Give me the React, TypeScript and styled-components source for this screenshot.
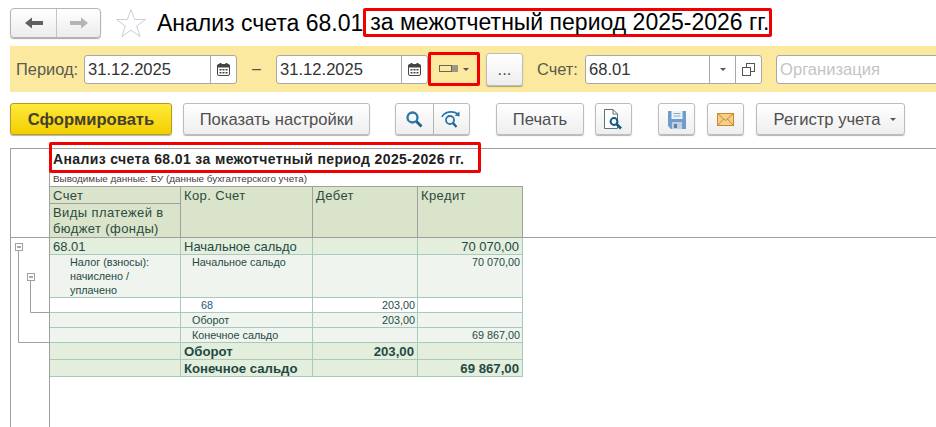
import React from "react";
import styled, { createGlobalStyle } from "styled-components";

const Global = createGlobalStyle`
  html, body { margin: 0; padding: 0; background: #fff; }
  body { font-family: "Liberation Sans", Arial, sans-serif; }
  #root { width: 936px; height: 427px; overflow: hidden; }
  * { box-sizing: border-box; }
`;

const Page = styled.div`
  width: 936px;
  height: 427px;
  overflow: hidden;
  display: flex;
  flex-direction: column;
  position: relative;
`;

const TitleBar = styled.div`
  display: flex;
  align-items: center;
  height: 46px;
  padding: 5px 0 6px 10px;
`;

const NavGroup = styled.div`
  display: flex;
  width: 91px;
  height: 30px;
  border: 1px solid #b4b4b4;
  border-radius: 4px;
  background: linear-gradient(#fff, #ececec);
  box-shadow: 0 1px 1px rgba(0, 0, 0, 0.35);
`;

const NavPart = styled.div<{ $w: number; $div?: boolean }>`
  width: ${(p) => p.$w}px;
  display: flex;
  align-items: center;
  justify-content: center;
  border-right: ${(p) => (p.$div ? "1px solid #c4c4c4" : "none")};
`;

const StarWrap = styled.div`
  margin-left: 14px;
  width: 32px;
  height: 30px;
`;

const Title = styled.div`
  margin-left: 10px;
  font-size: 23px;
  line-height: 28px;
  color: #000;
  white-space: nowrap;
  display: flex;
  align-items: center;
`;

const TitleMark = styled.span`
  display: inline-block;
  height: 29px;
  line-height: 23px;
  padding: 0 0 0 4px;
  border: 3px solid #f00000;
  border-radius: 2px;
`;

const FilterBar = styled.div`
  margin-left: 10px;
  height: 46px;
  background: #fbe9a0;
  display: flex;
  align-items: center;
  padding-left: 6px;
  flex-shrink: 0;
`;

const Label = styled.span<{ $w: number; $ml?: number }>`
  width: ${(p) => p.$w}px;
  flex-shrink: 0;
  font-size: 16.4px;
  color: #5a5a50;
  margin-left: ${(p) => p.$ml ?? 0}px;
  white-space: nowrap;
`;

const Field = styled.div<{ $w: number; $ml?: number }>`
  width: ${(p) => p.$w}px;
  margin-left: ${(p) => p.$ml ?? 0}px;
  height: 29px;
  flex-shrink: 0;
  background: #fff;
  border: 1px solid #a8a8a8;
  border-radius: 3px;
  display: flex;
  align-items: stretch;
`;

const FieldText = styled.div<{ $ph?: boolean }>`
  flex: 1;
  min-width: 0;
  padding-left: 3px;
  font-size: 16.6px;
  line-height: 27px;
  color: ${(p) => (p.$ph ? "#c4c4c4" : "#333")};
  white-space: nowrap;
`;

const FieldBtn = styled.div<{ $w: number }>`
  width: ${(p) => p.$w}px;
  border-left: 1px solid #a8a8a8;
  display: flex;
  align-items: center;
  justify-content: center;
`;

const Dash = styled.span`
  width: 39px;
  text-align: center;
  font-size: 16px;
  color: #555;
  flex-shrink: 0;
`;

const Caret = styled.span`
  display: inline-block;
  width: 0;
  height: 0;
  border-left: 3px solid transparent;
  border-right: 3px solid transparent;
  border-top: 3px solid #555;
`;

const PeriodKind = styled.div`
  width: 52px;
  height: 34px;
  flex-shrink: 0;
  border: 3px solid #f00000;
  border-radius: 2px;
  display: flex;
  align-items: center;
  justify-content: center;
  gap: 4px;
`;

const Button = styled.button<{ $w: number; $ml?: number; $h?: number }>`
  width: ${(p) => p.$w}px;
  height: ${(p) => p.$h ?? 32}px;
  margin-left: ${(p) => p.$ml ?? 0}px;
  flex-shrink: 0;
  padding: 1px 0 0;
  font-family: inherit;
  font-size: 16.6px;
  color: #4f4f4f;
  background: linear-gradient(#fff, #eee);
  border: 1px solid #bcbcbc;
  border-radius: 3px;
  box-shadow: 0 1px 1px rgba(0, 0, 0, 0.3);
  display: flex;
  align-items: center;
  justify-content: center;
  gap: 10px;
`;

const PrimaryButton = styled(Button)`
  font-weight: bold;
  color: #444030;
  background: linear-gradient(#ffe93c, #f2cf00);
  border-color: #b59c20;
`;

const RegisterButton = styled(Button)`
  padding-left: 9px;
`;

const ToolGroup = styled.div`
  width: 75px;
  height: 32px;
  margin-left: 25px;
  flex-shrink: 0;
  display: flex;
  background: linear-gradient(#fff, #eee);
  border: 1px solid #bcbcbc;
  border-radius: 3px;
  box-shadow: 0 1px 1px rgba(0, 0, 0, 0.3);
`;

const ToolPart = styled.div<{ $w: number; $div?: boolean }>`
  width: ${(p) => p.$w}px;
  display: flex;
  align-items: center;
  justify-content: center;
  border-right: ${(p) => (p.$div ? "1px solid #b4b4b4" : "none")};
`;

const ActionBar = styled.div`
  display: flex;
  align-items: center;
  height: 32px;
  margin-top: 11px;
  padding-left: 10px;
  flex-shrink: 0;
`;

const Report = styled.div`
  margin: 13px 0 0 10px;
  flex: 1;
  min-height: 0;
  border-top: 1px solid #a0a0a0;
  border-left: 1px solid #a0a0a0;
  display: flex;
  flex-direction: column;
`;

const ReportHead = styled.div`
  height: 89px;
  flex-shrink: 0;
  display: flex;
  border-bottom: 1px solid #a0a0a0;
`;

const ReportBody = styled.div`
  flex: 1;
  display: flex;
  min-height: 0;
`;

const Gutter = styled.div`
  width: 39px;
  flex-shrink: 0;
  border-right: 1px solid #a0a0a0;
`;

const HeadContent = styled.div`
  width: 474px;
  position: relative;
  display: flex;
  flex-direction: column;
`;

const ReportTitle = styled.div`
  height: 23px;
  padding: 2px 0 0 3px;
  font-size: 14px;
  font-weight: bold;
  color: #222;
  line-height: 16px;
  white-space: nowrap;
  letter-spacing: 0.37px;
`;

const TitleFrame = styled.div`
  position: absolute;
  left: -1px;
  top: -7px;
  width: 432px;
  height: 31px;
  border: 3px solid #f00000;
  border-radius: 2px;
  pointer-events: none;
`;

const ReportSub = styled.div`
  height: 15px;
  padding-left: 3px;
  font-size: 9.9px;
  line-height: 15px;
  color: #4a3a3a;
  white-space: nowrap;
`;

const HeadGrid = styled.div`
  flex: 1;
  width: 473px;
  display: grid;
  grid-template-columns: 131px 132px 105px 105px;
  grid-template-rows: 17px 33px;
  border-top: 1px solid #a0a0a0;
  background: #d9e4cb;
`;

const HeadCell = styled.div<{ $col: number; $span?: boolean; $bottom?: boolean }>`
  grid-column: ${(p) => p.$col};
  grid-row: ${(p) => (p.$span ? "1 / span 2" : "auto")};
  padding: 1px 3px 0 3px;
  font-size: 13px;
  line-height: 16px;
  color: #2e4a3c;
  border-right: 1px solid #a0a0a0;
  border-bottom: ${(p) => (p.$bottom ? "1px solid #a0a0a0" : "none")};
  letter-spacing: 0.4px;
`;

const Table = styled.div`
  width: 473px;
  display: flex;
  flex-direction: column;
`;

type Kind = "top" | "sub" | "plain";

const Row = styled.div<{ $h: number; $kind: Kind }>`
  display: grid;
  grid-template-columns: 131px 132px 105px 105px;
  height: ${(p) => p.$h}px;
  background: ${(p) => (p.$kind === "top" ? "#e3eedd" : p.$kind === "sub" ? "#eff4ee" : "#fff")};
  border-bottom: 1px solid #a9c9bd;
  color: #1f4a44;
`;

/* one text style per row tier: main rows, detail rows, bold totals */
const Cell = styled.div<{ $tier: "main" | "detail" | "total"; $right?: boolean; $pl?: number; $link?: boolean }>`
  border-right: 1px solid #a9c9bd;
  padding: ${(p) => (p.$tier === "detail" ? 0 : 1)}px ${(p) => (p.$tier === "detail" ? 2 : 3)}px 0 ${(p) => p.$pl ?? 3}px;
  font-size: ${(p) => (p.$tier === "main" ? 13 : p.$tier === "detail" ? 10.8 : 13.2)}px;
  font-weight: ${(p) => (p.$tier === "total" ? "bold" : "normal")};
  line-height: ${(p) => (p.$tier === "detail" ? 14 : p.$tier === "main" ? 15 : 16)}px;
  text-align: ${(p) => (p.$right ? "right" : "left")};
  color: ${(p) => (p.$link ? "#1d5a86" : "inherit")};
  white-space: pre-line;
  min-height: 0;
`;

const Star = () => (
  <svg width="32" height="30" viewBox="0 0 32 30" fill="none">
    <path d="M16 1.5 L19.6 11.5 L30.5 11.5 L21.7 18 L25 28.5 L16 22.2 L7 28.5 L10.3 18 L1.5 11.5 L12.4 11.5 Z" fill="#fff" stroke="#c9ced6" strokeWidth="1" />
  </svg>
);

const ArrowLeft = () => (
  <svg width="18" height="12" viewBox="0 0 18 12"><path d="M0 6 L7 0.5 V4 H18 V8 H7 V11.5 Z" fill="#5f5f5f" /></svg>
);
const ArrowRight = () => (
  <svg width="18" height="12" viewBox="0 0 18 12"><path d="M18 6 L11 0.5 V4 H0 V8 H11 V11.5 Z" fill="#b4b4b4" /></svg>
);

const Calendar = () => (
  <svg width="13" height="13" viewBox="0 0 13 13">
    <rect x="0.5" y="1.5" width="12" height="11" rx="1.5" fill="#fff" stroke="#444" />
    <rect x="0.5" y="1.5" width="12" height="3" fill="#444" />
    <rect x="2.5" y="0" width="2" height="3" fill="#444" />
    <rect x="8.5" y="0" width="2" height="3" fill="#444" />
    <g fill="#444">
      <rect x="2.5" y="6" width="2" height="1.5" /><rect x="5.5" y="6" width="2" height="1.5" /><rect x="8.5" y="6" width="2" height="1.5" />
      <rect x="2.5" y="9" width="2" height="1.5" /><rect x="5.5" y="9" width="2" height="1.5" /><rect x="8.5" y="9" width="2" height="1.5" />
    </g>
  </svg>
);

const PeriodIcon = () => (
  <svg width="20" height="8" viewBox="0 0 20 8">
    <rect x="0.5" y="0.5" width="12" height="6" fill="none" stroke="#6b6650" />
    <rect x="13" y="0" width="6" height="7" fill="#9c9785" />
  </svg>
);

const CopyIcon = () => (
  <svg width="13" height="13" viewBox="0 0 13 13" fill="none" stroke="#555">
    <rect x="4.5" y="0.5" width="8" height="8" fill="#fff" />
    <rect x="0.5" y="4.5" width="8" height="8" fill="#fff" />
  </svg>
);

const Search = () => (
  <svg width="17" height="17" viewBox="0 0 17 17" fill="none">
    <circle cx="6.5" cy="6.5" r="5" stroke="#2a76a8" strokeWidth="2.3" />
    <path d="M10.5 10.5 L15.5 15.5" stroke="#1f5f8c" strokeWidth="2.8" />
  </svg>
);

const SearchRefresh = () => (
  <svg width="20" height="19" viewBox="0 0 20 19" fill="none">
    <path d="M1 7 C3 2 11 0 17 4" stroke="#2a76a8" strokeWidth="1.6" />
    <path d="M18.5 1.5 L18.5 6.5 L13.5 5.5 Z" fill="#2a76a8" />
    <circle cx="9" cy="10" r="4" stroke="#2a76a8" strokeWidth="1.8" />
    <path d="M12 13 L15.5 17" stroke="#1f5f8c" strokeWidth="2.2" />
  </svg>
);

const Preview = () => (
  <svg width="19" height="21" viewBox="0 0 19 21" fill="none">
    <path d="M0.5 0.5 H9 L13.5 5 V19.5 H0.5 Z" fill="#fff" stroke="#60707c" />
    <path d="M9 0.5 V5 H13.5" stroke="#60707c" />
    <circle cx="10" cy="12.5" r="3.4" fill="#fff" stroke="#135a80" strokeWidth="2" />
    <path d="M12.5 15 L17 19.5" stroke="#135a80" strokeWidth="2.6" />
  </svg>
);

const Floppy = () => (
  <svg width="18" height="18" viewBox="0 0 18 18">
    <path d="M0 0 H18 V18 H3 L0 15 Z" fill="#6f9ccf" />
    <rect x="3.5" y="0" width="11" height="8" fill="#eef3f8" />
    <path d="M5.5 2.5 H12.5 M5.5 5 H12.5" stroke="#8aa9c8" />
    <rect x="4" y="11" width="10" height="7" fill="#c3cfdc" />
    <rect x="6" y="13" width="3" height="4" fill="#5b7ea6" />
  </svg>
);

const Mail = () => (
  <svg width="17" height="13" viewBox="0 0 17 13">
    <rect x="0.5" y="0.5" width="16" height="12" fill="#f4cf87" stroke="#c98a2c" />
    <path d="M0.5 0.5 L8.5 7.5 L16.5 0.5 M0.5 12.5 L6.5 6 M16.5 12.5 L10.5 6" fill="none" stroke="#c98a2c" />
  </svg>
);

const TreeLines = () => (
  <svg width="38" height="150" viewBox="0 0 38 150" fill="none" style={{ display: "block" }}>
    <path d="M7.5 12 V104.5 H38 M19.5 42 V74.5 H38" stroke="#a0a0a0" />
    <rect x="4.5" y="5.5" width="7" height="7" fill="#fff" stroke="#a0a0a0" />
    <path d="M6 9 H10" stroke="#555" />
    <rect x="16.5" y="35.5" width="7" height="7" fill="#fff" stroke="#a0a0a0" />
    <path d="M18 39 H22" stroke="#555" />
  </svg>
);

export default function App() {
  return (
    <Page>
      <Global />
      <TitleBar>
        <NavGroup>
          <NavPart $w={46} $div><ArrowLeft /></NavPart>
          <NavPart $w={43}><ArrowRight /></NavPart>
        </NavGroup>
        <StarWrap><Star /></StarWrap>
        <Title>
          Анализ счета 68.01
          <TitleMark>за межотчетный период 2025-2026 гг.</TitleMark>
        </Title>
      </TitleBar>

      <FilterBar>
        <Label $w={68}>Период:</Label>
        <Field $w={153}>
          <FieldText>31.12.2025</FieldText>
          <FieldBtn $w={26}><Calendar /></FieldBtn>
        </Field>
        <Dash>–</Dash>
        <Field $w={152}>
          <FieldText>31.12.2025</FieldText>
          <FieldBtn $w={26}><Calendar /></FieldBtn>
        </Field>
        <PeriodKind><PeriodIcon /><Caret /></PeriodKind>
        <Button $w={37} $ml={6} $h={33}>...</Button>
        <Label $w={48} $ml={14}>Счет:</Label>
        <Field $w={177}>
          <FieldText>68.01</FieldText>
          <FieldBtn $w={26}><Caret /></FieldBtn>
          <FieldBtn $w={26}><CopyIcon /></FieldBtn>
        </Field>
        <Field $w={180} $ml={14}>
          <FieldText $ph>Организация</FieldText>
        </Field>
      </FilterBar>

      <ActionBar>
        <PrimaryButton $w={162}>Сформировать</PrimaryButton>
        <Button $w={187} $ml={11}>Показать настройки</Button>
        <ToolGroup>
          <ToolPart $w={38} $div><Search /></ToolPart>
          <ToolPart $w={36}><SearchRefresh /></ToolPart>
        </ToolGroup>
        <Button $w={88} $ml={26}>Печать</Button>
        <Button $w={37} $ml={11}><Preview /></Button>
        <Button $w={37} $ml={26}><Floppy /></Button>
        <Button $w={37} $ml={12}><Mail /></Button>
        <RegisterButton $w={149} $ml={12}>Регистр учета<Caret /></RegisterButton>
      </ActionBar>

      <Report>
        <ReportHead>
          <Gutter />
          <HeadContent>
            <ReportTitle>Анализ счета 68.01 за межотчетный период 2025-2026 гг.</ReportTitle>
            <TitleFrame />
            <ReportSub>Выводимые данные: БУ (данные бухгалтерского учета)</ReportSub>
            <HeadGrid>
              <HeadCell $col={1} $bottom>Счет</HeadCell>
              <HeadCell $col={2} $span>Кор. Счет</HeadCell>
              <HeadCell $col={3} $span>Дебет</HeadCell>
              <HeadCell $col={4} $span>Кредит</HeadCell>
              <HeadCell $col={1}>Виды платежей в бюджет (фонды)</HeadCell>
            </HeadGrid>
          </HeadContent>
        </ReportHead>
        <ReportBody>
          <Gutter><TreeLines /></Gutter>
          <Table>
            <Row $h={17} $kind="top">
              <Cell $tier="main">68.01</Cell>
              <Cell $tier="main">Начальное сальдо</Cell>
              <Cell $tier="main" $right />
              <Cell $tier="main" $right>70 070,00</Cell>
            </Row>
            <Row $h={43} $kind="sub">
              <Cell $tier="detail" $pl={20}>{"Налог (взносы):\nначислено /\nуплачено"}</Cell>
              <Cell $tier="detail" $pl={11}>Начальное сальдо</Cell>
              <Cell $tier="detail" $right />
              <Cell $tier="detail" $right>70 070,00</Cell>
            </Row>
            <Row $h={15} $kind="plain">
              <Cell $tier="detail" />
              <Cell $tier="detail" $pl={20} $link>68</Cell>
              <Cell $tier="detail" $right>203,00</Cell>
              <Cell $tier="detail" $right />
            </Row>
            <Row $h={15} $kind="sub">
              <Cell $tier="detail" />
              <Cell $tier="detail" $pl={11}>Оборот</Cell>
              <Cell $tier="detail" $right>203,00</Cell>
              <Cell $tier="detail" $right />
            </Row>
            <Row $h={15} $kind="sub">
              <Cell $tier="detail" />
              <Cell $tier="detail" $pl={11}>Конечное сальдо</Cell>
              <Cell $tier="detail" $right />
              <Cell $tier="detail" $right>69 867,00</Cell>
            </Row>
            <Row $h={17} $kind="top">
              <Cell $tier="total" />
              <Cell $tier="total">Оборот</Cell>
              <Cell $tier="total" $right>203,00</Cell>
              <Cell $tier="total" $right />
            </Row>
            <Row $h={17} $kind="top">
              <Cell $tier="total" />
              <Cell $tier="total">Конечное сальдо</Cell>
              <Cell $tier="total" $right />
              <Cell $tier="total" $right>69 867,00</Cell>
            </Row>
          </Table>
        </ReportBody>
      </Report>
    </Page>
  );
}
